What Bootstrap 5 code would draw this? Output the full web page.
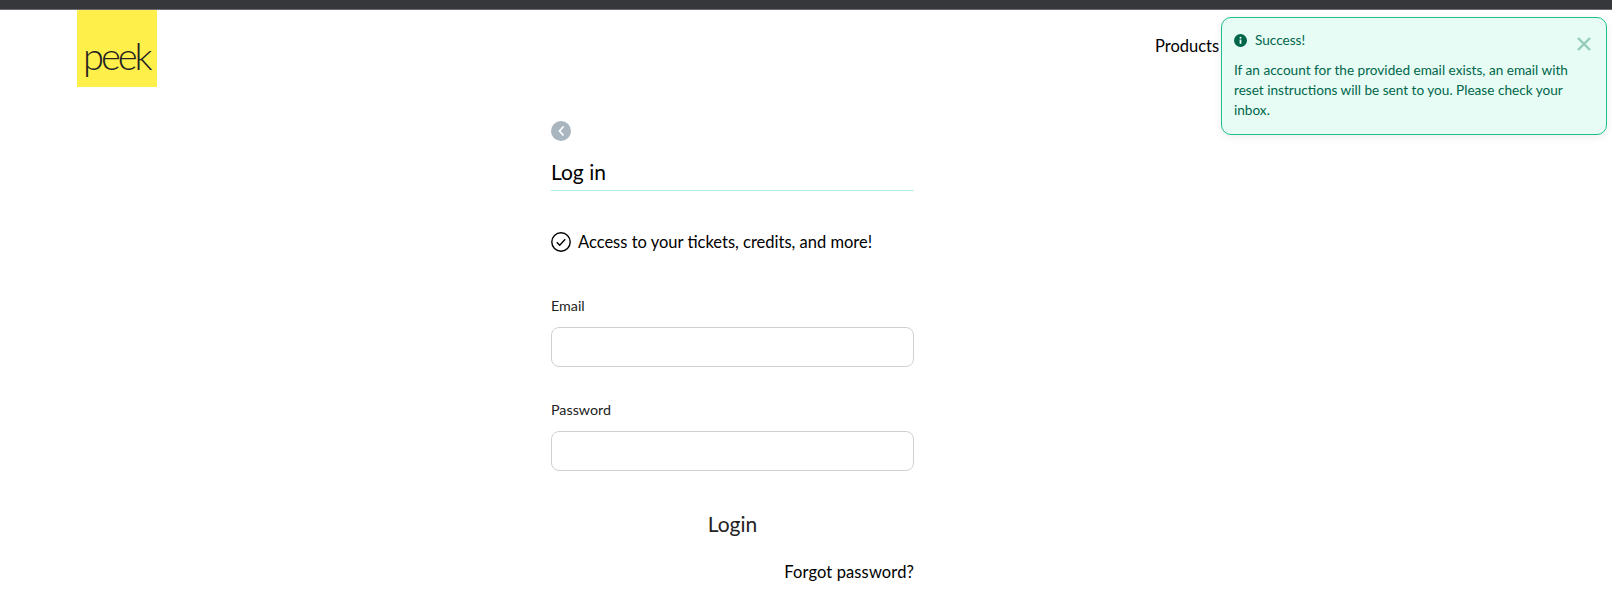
<!DOCTYPE html>
<html lang="en">
<head>
    <meta charset="UTF-8">
    <meta name="viewport" content="width=device-width, initial-scale=1.0">
    <title>Log in</title>
    <link href="https://cdn.jsdelivr.net/npm/bootstrap@5.3.0/dist/css/bootstrap.min.css" rel="stylesheet">
    <style>
        body { font-family: Lato, "Liberation Sans", sans-serif; color: #000; overflow: hidden; height: 589px; }
        .top-strip { height: 10px; background: #36373b; border-bottom: 1px solid #6b6c70; }
        .site-nav { height: 77px; padding-left: 77px; }
        .logo-box { width: 80px; height: 77px; background: #ffef4b; color: #222; font-size: 38px; font-weight: 300; letter-spacing: -3px; line-height: 1; padding: 26px 0 0 6px; }
        .nav-item-link { position: absolute; left: 1155px; top: 34px; font-size: 16.5px; color: #000; text-decoration: none; }
        .success-toast { position: absolute; left: 1221px; top: 17px; width: 386px; height: 118px; background: #e6fcf5; border: 1px solid #1fbf8f; border-radius: 10px; box-shadow: 0 2px 8px rgba(0,0,0,.08); color: #00664a; font-size: 13.6px; padding: 12px 12px; }
        .toast-line { line-height: 20px; margin-top: 10px; }
        .toast-close { position: absolute; right: 15px; top: 19px; }
        .login-col { width: 363px; margin-left: 551px; padding-top: 34px; }
        .back-dot { width: 20px; height: 20px; border-radius: 50%; background: #a9b5bf; }
        .login-title { font-size: 21px; font-weight: 400; line-height: 28px; margin: 17px 0 0; padding-bottom: 4px; border-bottom: 1px solid #aeeeee; }
        .perk-line { margin-top: 40px; font-size: 16.5px; line-height: 22px; gap: 7px; }
        .field-label { font-size: 14.3px; color: #222; line-height: 18px; margin-bottom: 12px; }
        .field-input { height: 40px; border-color: #d1d1d1; border-radius: 8px; }
        .field-block-first { margin-top: 44px; }
        .field-block-second { margin-top: 34px; }
        .login-row { margin-top: 39px; }
        .login-btn { font-size: 21px; line-height: 28px; color: #222; border: 0; background: none; padding: 0; }
        .forgot-row { margin-top: 22px; }
        .forgot-link { font-size: 16.5px; letter-spacing: .12px; color: #000; text-decoration: none; line-height: 22px; }
    </style>
</head>
<body>
<div class="top-strip"></div>
<nav class="site-nav d-flex">
    <a class="logo-box d-block text-decoration-none" href="#">peek</a>
    <a class="nav-item-link" href="#">Products</a>
</nav>

<div class="success-toast" role="alert">
    <div class="d-flex align-items-center gap-2">
        <svg width="13" height="13" viewBox="0 0 13 13"><circle cx="6.5" cy="6.5" r="6.5" fill="#00664a"/><rect x="5.6" y="5.6" width="1.8" height="4.2" fill="#e6fcf5"/><circle cx="6.5" cy="3.8" r="1" fill="#e6fcf5"/></svg>
        <span>Success!</span>
    </div>
    <div class="toast-line">If an account for the provided email exists, an email with reset instructions will be sent to you. Please check your inbox.</div>
    <svg class="toast-close" width="14" height="14" viewBox="0 0 14 14"><path d="M1 1l12 12M13 1L1 13" stroke="#93cdb9" stroke-width="2.4"/></svg>
</div>

<main class="login-col">
    <div class="back-dot d-flex align-items-center justify-content-center">
        <svg width="9" height="12" viewBox="0 0 9 12"><path d="M6.5 1.5L2.5 6l4 4.5" fill="none" stroke="#fff" stroke-width="1.7"/></svg>
    </div>
    <h1 class="login-title">Log in</h1>
    <div class="perk-line d-flex align-items-center">
        <svg width="20" height="20" viewBox="0 0 20 20"><circle cx="10" cy="10" r="9.2" fill="none" stroke="#000" stroke-width="1.4"/><path d="M5.8 10.3l2.9 2.9 5.5-6" fill="none" stroke="#000" stroke-width="1.4"/></svg>
        <span>Access to your tickets, credits, and more!</span>
    </div>
    <form>
        <div class="field-block-first">
            <label class="field-label d-block" for="email">Email</label>
            <input class="form-control field-input" id="email" type="email">
        </div>
        <div class="field-block-second">
            <label class="field-label d-block" for="password">Password</label>
            <input class="form-control field-input" id="password" type="password">
        </div>
        <div class="text-center login-row"><button class="login-btn" type="button">Login</button></div>
        <div class="text-end forgot-row"><a class="forgot-link" href="#">Forgot password?</a></div>
    </form>
</main>
<script src="https://cdn.jsdelivr.net/npm/bootstrap@5.3.0/dist/js/bootstrap.bundle.min.js"></script>
</body>
</html>
